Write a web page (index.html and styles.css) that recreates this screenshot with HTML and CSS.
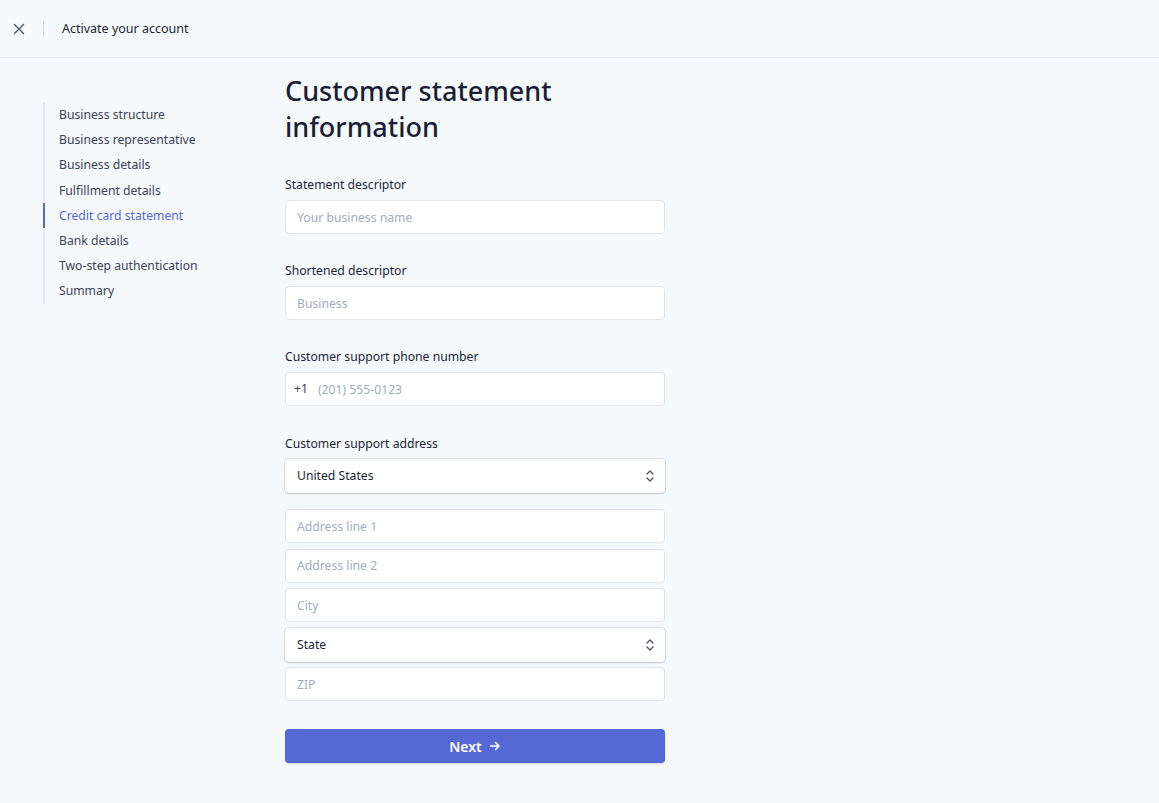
FILE: index.html
```html
<!doctype html>
<html lang="en" dir="ltr">
<head>
  <meta charset="utf-8" />
  <title>Activate your account</title>
  <link rel="stylesheet" href="styles.css">
</head>
<body>

<header class="topbar">
  <button class="close" type="button" aria-label="Close">
    <svg width="12" height="12" viewBox="0 0 12 12"><path d="M1.5 1.5l9 9M10.5 1.5l-9 9" stroke="currentColor" stroke-width="1.4" stroke-linecap="round" fill="none"/></svg>
  </button>
  <span class="divider"></span>
  <span class="topbar-title">Activate your account</span>
</header>

<div class="layout">
  <nav class="steps">
    <ul>
      <li>Business structure</li>
      <li>Business representative</li>
      <li>Business details</li>
      <li>Fulfillment details</li>
      <li class="active">Credit card statement</li>
      <li>Bank details</li>
      <li>Two-step authentication</li>
      <li>Summary</li>
    </ul>
  </nav>

  <form class="main">
    <h1>Customer statement information</h1>

    <div class="field">
      <label>Statement descriptor</label>
      <input class="box" type="text" placeholder="Your business name" />
    </div>

    <div class="field">
      <label>Shortened descriptor</label>
      <input class="box" type="text" placeholder="Business" />
    </div>

    <div class="field phone-field">
      <label>Customer support phone number</label>
      <span class="box phone">
        <span class="prefix">+1</span>
        <input type="text" placeholder="(201) 555-0123" />
      </span>
    </div>

    <div class="field">
      <label>Customer support address</label>
      <div class="box select">
        <span>United States</span>
        <svg width="10" height="14" viewBox="0 0 10 14"><path d="M2 5l3-3 3 3M2 9l3 3 3-3" stroke="currentColor" stroke-width="1.4" stroke-linecap="round" stroke-linejoin="round" fill="none"/></svg>
      </div>
      <div class="address">
        <input class="box" type="text" placeholder="Address line 1" />
        <input class="box" type="text" placeholder="Address line 2" />
        <input class="box" type="text" placeholder="City" />
        <div class="box select">
          <span>State</span>
          <svg width="10" height="14" viewBox="0 0 10 14"><path d="M2 5l3-3 3 3M2 9l3 3 3-3" stroke="currentColor" stroke-width="1.4" stroke-linecap="round" stroke-linejoin="round" fill="none"/></svg>
        </div>
        <input class="box" type="text" placeholder="ZIP" />
      </div>
    </div>

    <button class="next" type="button">
      Next
      <svg width="12" height="12" viewBox="0 0 12 12"><path d="M1.5 6h8.5M6.5 2.5L10 6l-3.5 3.5" stroke="currentColor" stroke-width="1.5" stroke-linecap="round" stroke-linejoin="round" fill="none"/></svg>
    </button>
  </form>
</div>

</body>
</html>
```

FILE: styles.css
```css
body {
  font-family: "Noto Sans", "Open Sans", sans-serif;
  font-size: 12.2px;
  line-height: 1.3;
  margin: 0;
  background-color: #f6f9fc;
  color: #1a1f36;
  min-height: 803px;
}
.topbar {
  display: flex;
  align-items: center;
  height: 57px;
  border-bottom: 1px solid #e3e8ee;
  padding-left: 12px;
}
.close {
  display: flex;
  align-items: center;
  justify-content: center;
  width: 14px;
  height: 14px;
  padding: 0;
  border: 0;
  background: none;
  color: #4f566b;
  cursor: pointer;
}
.divider {
  width: 1px;
  height: 16px;
  background-color: #d8dee4;
  margin: 0 18px 0 17px;
}
.topbar-title {
  font-size: 12.5px;
  padding-top: 2px;
  color: #1a1f36;
}
.layout {
  display: flex;
}
.steps {
  width: 242px;
  padding: 44px 0 0 43px;
}
.steps ul {
  list-style: none;
  margin: 0;
  padding: 0;
  border-left: 2px solid #e3e8ee;
}
.steps li {
  height: 25.2px;
  line-height: 25.2px;
  padding-left: 14px;
  margin-left: -2px;
  border-left: 2px solid transparent;
  color: #3c4257;
}
.steps li.active {
  color: #5469d4;
  border-left-color: #5469d4;
}
.main {
  width: 380px;
  padding-top: 15px;
}
h1 {
  font-size: 27px;
  line-height: 36px;
  font-weight: 500;
  margin: 0 0 31px;
  width: 300px;
  color: #1a1f36;
}
.field {
  margin-bottom: 28px;
}
.phone-field {
  margin-bottom: 29px;
}
.field label {
  display: block;
  height: 18px;
  line-height: 18px;
  margin-bottom: 6px;
  color: #1a1f36;
}
.box {
  display: flex;
  align-items: center;
  box-sizing: border-box;
  width: 100%;
  height: 34px;
  margin: 0;
  padding: 0 11px;
  background-color: #fff;
  border: 1px solid #dfe3eb;
  border-radius: 4px;
  font-family: inherit;
  font-size: 12.2px;
  color: #1a1f36;
}
.box::placeholder,
.phone input::placeholder {
  color: #a3acb9;
}
.phone .prefix {
  color: #3c4257;
  margin-right: 10px;
  margin-left: -3px;
}
.phone input {
  flex: 1;
  border: 0;
  padding: 0;
  font-family: inherit;
  font-size: 12.2px;
  outline: none;
  background: none;
}
.select {
  justify-content: space-between;
  border-color: transparent;
  box-shadow: 0 0 0 1px rgba(60, 66, 87, 0.13), 0 1px 2px rgba(60, 66, 87, 0.2);
}
.select svg {
  color: #4f566b;
  margin-right: -2px;
}
.address {
  display: flex;
  flex-direction: column;
  gap: 5.5px;
  margin-top: 16px;
}
.next {
  display: flex;
  align-items: center;
  justify-content: center;
  gap: 7px;
  width: 100%;
  height: 34px;
  border: 0;
  border-radius: 4px;
  background-color: #5469d4;
  color: #fff;
  font-family: inherit;
  font-size: 14px;
  font-weight: 600;
  box-shadow: 0 1px 2px rgba(60, 66, 87, 0.2);
  cursor: pointer;
}
```
